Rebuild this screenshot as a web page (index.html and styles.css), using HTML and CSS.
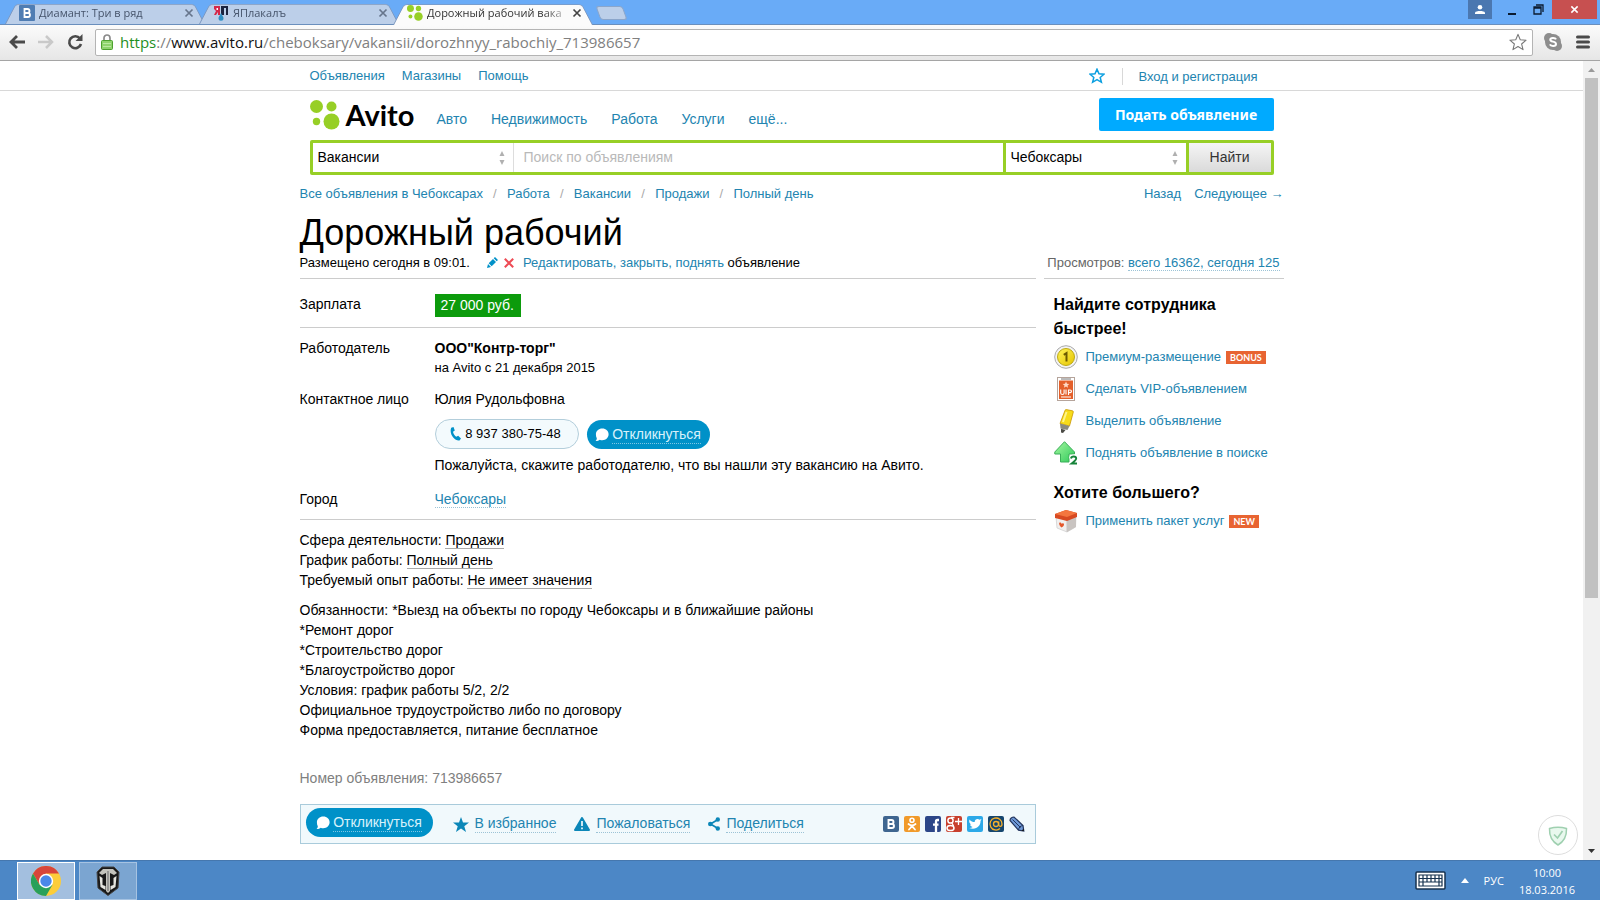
FILE: index.html
```
<!DOCTYPE html>
<html lang="ru">
<head>
<meta charset="utf-8">
<title>Дорожный рабочий</title>
<link rel="stylesheet" href="styles.css">
</head>
<body>
<svg width="0" height="0" class="defs" aria-hidden="true">
  <defs>
    <symbol id="x" viewBox="0 0 10 10"><path d="M1.500 1.500l7 7M8.500 1.500l-7 7" stroke="currentColor" stroke-width="1.700" fill="none"/></symbol>
    <symbol id="chat" viewBox="0 0 14 14"><path d="M7.300 0.500C11 0.500 13.600 3 13.600 6.300S11 12.200 7.300 12.200c-1 0-1.700-.1-2.500-.5C3.800 12.600 2.200 13.200.5 13.100c.9-.8 1.300-1.700 1.300-2.900C1.200 9.200.9 7.800.9 6.300.9 3 3.600.5 7.300.5z" fill="#fff"/></symbol>
    <symbol id="sort" viewBox="0 0 6 14"><path d="M3 0l2.500 5h-5zM3 14L.5 9h5z" fill="#b0b0b0"/></symbol>
    <symbol id="avito" viewBox="0 0 30 30"><g fill="#97cf26"><circle cx="6.500" cy="6.500" r="6.500"/><circle cx="21.500" cy="6.500" r="5"/><circle cx="6.500" cy="21.500" r="3.700"/><circle cx="21.500" cy="21.500" r="8"/></g></symbol>
    <linearGradient id="gy" x1="0" x2="1" y2="1"><stop offset="0" stop-color="#fff45a"/><stop offset="1" stop-color="#e5c400"/></linearGradient>
    <linearGradient id="gg" x1="0" x2="1" y2="1"><stop offset="0" stop-color="#a5f7a0"/><stop offset="1" stop-color="#2fc95a"/></linearGradient>
  </defs>
</svg>
<div class="window">
  <header class="tabs">
    <div class="tab">
      <svg class="fav" viewBox="0 0 16 16"><rect width="16" height="16" rx="1" fill="#4f7db3"/><path d="M5.500 4h3a2 2 0 0 1 0 4h-3zM5.500 8h3.500a2 2 0 0 1 0 4H5.500z" fill="none" stroke="#fff" stroke-width="1.800"/></svg>
      <span class="tab-title">Диамант: Три в ряд</span>
      <button class="tab-close" aria-label="Закрыть"><svg viewBox="0 0 10 10"><use href="#x"/></svg></button>
    </div>
    <div class="tab">
      <svg class="fav" viewBox="0 0 16 16"><path d="M1 1h6v9H5V7L3 10H1l2-4-2-2z" fill="#d5284a"/><path d="M8 1h7v9h-2V3h-2v7H8z" fill="#1b2440"/><path d="M3.500 3h1.500v2H3.500z" fill="#fff"/><path d="M8 8c1.500 3 2.500 4 2.500 5.300a2.500 2.500 0 0 1-5 0C5.500 12 6.500 11 8 8z" fill="#2d8fc4"/></svg>
      <span class="tab-title">ЯПлакалъ</span>
      <button class="tab-close" aria-label="Закрыть"><svg viewBox="0 0 10 10"><use href="#x"/></svg></button>
    </div>
    <div class="tab active">
      <svg class="fav" viewBox="0 0 30 30"><use href="#avito"/></svg>
      <span class="tab-title fade">Дорожный рабочий вака</span>
      <button class="tab-close" aria-label="Закрыть"><svg viewBox="0 0 10 10"><use href="#x"/></svg></button>
    </div>
    <button class="tab-new" aria-label="Новая вкладка"></button>
    <div class="win-buttons">
      <button class="user" aria-label="Профиль"><svg width="10" height="9" viewBox="0 0 10 9"><circle cx="5" cy="2.300" r="2.300" fill="#fff"/><path d="M0 9V7.500C1 5.500 9 5.500 10 7.500V9z" fill="#fff"/></svg></button>
      <button class="wb" aria-label="Свернуть"><svg width="10" height="12" viewBox="0 0 10 12"><path d="M1 10h8" stroke="#0b1b30" stroke-width="2"/></svg></button>
      <button class="wb" aria-label="Развернуть"><svg width="11" height="11" viewBox="0 0 11 11"><path d="M1 3h7v7H1zM1 4h7M3 1h7v7" fill="none" stroke="#0b1b30" stroke-width="1.300"/></svg></button>
      <button class="close" aria-label="Закрыть окно"><svg width="9" height="9" viewBox="0 0 10 10"><use href="#x"/></svg></button>
    </div>
  </header>
  <div class="toolbar">
    <button aria-label="Назад"><svg width="18" height="18" viewBox="0 0 18 18"><path d="M17 9H3M9 3L3 9l6 6" fill="none" stroke="#4a4a4a" stroke-width="2.800"/></svg></button>
    <button aria-label="Вперёд"><svg width="18" height="18" viewBox="0 0 18 18"><path d="M1 9h14M9 3l6 6-6 6" fill="none" stroke="#c9c9c9" stroke-width="2.500"/></svg></button>
    <button aria-label="Обновить"><svg width="18" height="18" viewBox="0 0 18 18"><path d="M14 5.500A6 6 0 1 0 15 11" fill="none" stroke="#4a4a4a" stroke-width="2.600"/><path d="M16.500 1v7h-7z" fill="#4a4a4a"/></svg></button>
    <div class="address">
      <svg width="12" height="16" viewBox="0 0 12 16"><path d="M3 8V4a3 3 0 0 1 6 0v4" fill="none" stroke="#8b8b8b" stroke-width="1.700"/><rect x=".5" y="6.500" width="11" height="9" rx="1" fill="#8fd36c" stroke="#4da12f"/><path d="M2 9.500h8M2 12.500h8" stroke="#b9eaa0"/></svg>
      <span class="url"><span class="https">https</span>://<b>www.avito.ru</b>/cheboksary/vakansii/dorozhnyy_rabochiy_713986657</span>
      <svg width="20" height="18" viewBox="0 0 20 20"><path d="M10 1.500l2.500 6 6.500.5-5 4.200 1.600 6.300L10 15l-5.600 3.500L6 12.200 1 8l6.500-.5z" fill="none" stroke="#777" stroke-width="1.200" stroke-linejoin="round"/></svg>
    </div>
    <button aria-label="Skype"><svg width="18" height="18" viewBox="0 0 18 18"><g fill="#8d8d8d"><circle cx="9" cy="9" r="8"/><circle cx="5" cy="5" r="5"/><circle cx="13" cy="13" r="5"/></g><path d="M12 6.300C11.300 4.500 6.300 4.400 6.300 6.700c0 2.500 5.700 1.400 5.700 4.200 0 2.700-5.200 2.600-6.100.5" fill="none" stroke="#fff" stroke-width="2"/></svg></button>
    <button class="menu" aria-label="Меню"><svg width="14" height="14" viewBox="0 0 14 14"><path d="M1.500 2h11M1.500 7h11M1.500 12h11" stroke="#4a4a4a" stroke-width="3" stroke-linecap="round"/></svg></button>
  </div>
  <div class="viewport">
    <main class="page">
      <div class="topbar">
        <nav class="wrap inset small">
          <a href="#">Объявления</a><a href="#">Магазины</a><a href="#">Помощь</a>
          <a href="#" class="fav-link" aria-label="Избранное"><svg width="16" height="16" viewBox="0 0 16 16"><path d="M8 1.200l2 4.600 5 .4-3.800 3.200 1.200 4.900L8 11.700l-4.400 2.600 1.200-4.900L1 6.200l5-.4z" fill="none" stroke="#0a9fe0" stroke-width="1.500"/></svg></a>
          <a href="#" class="login">Вход и регистрация</a>
        </nav>
      </div>
      <div class="wrap inset">
        <div class="head">
          <a href="#" class="logo"><svg width="30" height="30" viewBox="0 0 30 30"><use href="#avito"/></svg><span>Avito</span></a>
          <nav class="cats"><a href="#">Авто</a><a href="#">Недвижимость</a><a href="#">Работа</a><a href="#">Услуги</a><a href="#">ещё...</a></nav>
          <button class="post">Подать объявление</button>
        </div>
        <form class="search">
          <label class="sel cat"><select aria-label="Категория"><option>Вакансии</option></select><svg width="6" height="14" viewBox="0 0 6 14"><use href="#sort"/></svg></label>
          <input type="text" aria-label="Поиск" placeholder="Поиск по объявлениям">
          <label class="sel city"><select aria-label="Город"><option>Чебоксары</option></select><svg width="6" height="14" viewBox="0 0 6 14"><use href="#sort"/></svg></label>
          <button type="button">Найти</button>
        </form>
      </div>
      <div class="wrap">
        <nav class="crumbs small">
          <a href="#">Все объявления в Чебоксарах</a><i>/</i><a href="#">Работа</a><i>/</i><a href="#">Вакансии</a><i>/</i><a href="#">Продажи</a><i>/</i><a href="#">Полный день</a>
          <span class="pager"><a href="#">Назад</a><a href="#">Следующее →</a></span>
        </nav>
        <h1>Дорожный рабочий</h1>
        <div class="cols">
          <div class="left">
            <div class="meta small">
              <span>Размещено сегодня в 09:01.</span>
              <svg class="pencil" width="11" height="11" viewBox="0 0 11 11"><path d="M0 11l1-4 3 3zM1.700 6.300L6 2l3 3-4.300 4.300zM6.700 1.300L8 0l3 3-1.300 1.300z" fill="#0091c8"/></svg>
              <svg class="cross" width="12" height="12" viewBox="0 0 10 10"><use href="#x"/></svg>
              <span><a href="#">Редактировать, закрыть, поднять</a> объявление</span>
            </div>
            <dl class="row pay"><dt>Зарплата</dt><dd><span class="price">27 000 руб.</span></dd></dl>
            <div class="group">
              <dl class="row"><dt>Работодатель</dt><dd><strong>ООО"Контр-торг"</strong><div class="small since">на Avito с 21 декабря 2015</div></dd></dl>
              <dl class="row"><dt>Контактное лицо</dt><dd>Юлия Рудольфовна
                <div class="contact">
                  <button class="phone"><svg width="11" height="14" viewBox="0 0 11 14"><path d="M1.200.8L3.500 0l1.300 3.500L3 4.800c.4 2 1.500 3.700 3.200 4.900L8.200 8.800 11 11.500 9.500 13.500C5 14.500-1.300 7 1.200.8z" fill="#0091c8"/></svg>8 937 380-75-48</button>
                  <button class="reply"><svg width="14" height="14" viewBox="0 0 14 14"><use href="#chat"/></svg><span>Откликнуться</span></button>
                </div>
                Пожалуйста, скажите работодателю, что вы нашли эту вакансию на Авито.</dd></dl>
              <dl class="row"><dt>Город</dt><dd><a href="#" class="dot">Чебоксары</a></dd></dl>
            </div>
            <div class="text">
              <p>Сфера деятельности: <a href="#" class="dark">Продажи</a><br>График работы: <a href="#" class="dark">Полный день</a><br>Требуемый опыт работы: <a href="#" class="dark">Не имеет значения</a></p>
              <p>Обязанности: *Выезд на объекты по городу Чебоксары и в ближайшие районы<br>*Ремонт дорог<br>*Строительство дорог<br>*Благоустройство дорог<br>Условия: график работы 5/2, 2/2<br>Официальное трудоустройство либо по договору<br>Форма предоставляется, питание бесплатное</p>
            </div>
            <div class="number">Номер объявления: 713986657</div>
            <div class="actions">
              <button class="reply"><svg width="14" height="14" viewBox="0 0 14 14"><use href="#chat"/></svg><span>Откликнуться</span></button>
              <a href="#" class="act"><svg width="16" height="15" viewBox="0 0 16 15"><path d="M8 0l2 5.500 6 .1-4.700 3.600L13 15l-5-3.500L3 15l1.700-5.800L0 5.600l6-.1z" fill="#0c87b8"/></svg><span>В избранное</span></a>
              <a href="#" class="act"><svg width="16" height="14" viewBox="0 0 16 14"><path d="M8 1l7 12H1z" fill="#0c87b8" stroke="#0c87b8" stroke-width="2" stroke-linejoin="round"/><path d="M8 4v5M8 10.500v1.700" stroke="#fff" stroke-width="1.600"/></svg><span>Пожаловаться</span></a>
              <a href="#" class="act"><svg width="12" height="14" viewBox="0 0 12 14"><path d="M10 2.500L2.500 7l7.500 4.500" fill="none" stroke="#0c87b8" stroke-width="1.700"/><g fill="#0c87b8"><circle cx="9.800" cy="2.500" r="2.200"/><circle cx="2.300" cy="7" r="2.300"/><circle cx="9.800" cy="11.500" r="2.200"/></g></svg><span>Поделиться</span></a>
              <div class="social">
                <a href="#" aria-label="ВКонтакте"><svg viewBox="0 0 16 16"><rect width="16" height="16" rx="2" fill="#3f6690"/><path d="M5.500 4h3a2 2 0 0 1 0 4h-3zM5.500 8h3.500a2 2 0 0 1 0 4H5.500z" fill="none" stroke="#fff" stroke-width="1.900"/></svg></a>
                <a href="#" aria-label="Одноклассники"><svg viewBox="0 0 16 16"><rect width="16" height="16" rx="2" fill="#f19a2a"/><circle cx="8" cy="4.300" r="2" fill="none" stroke="#fff" stroke-width="1.600"/><path d="M4.500 8c2 1.700 5 1.700 7 0M5 13.500l3-3.300 3 3.300" fill="none" stroke="#fff" stroke-width="1.800" stroke-linecap="round"/></svg></a>
                <a href="#" aria-label="Facebook"><svg viewBox="0 0 16 16"><rect width="16" height="16" rx="2" fill="#2c4688"/><path d="M14 4h-1.500Q11 4 11 5.700V16M8 8.700h5.500" fill="none" stroke="#fff" stroke-width="2.300"/></svg></a>
                <a href="#" aria-label="Google+"><svg viewBox="0 0 16 16"><rect width="16" height="16" rx="2" fill="#c8402d"/><circle cx="4.500" cy="4.500" r="2.600" fill="none" stroke="#fff" stroke-width="1.500"/><ellipse cx="4.500" cy="12" rx="3.500" ry="2.600" fill="none" stroke="#fff" stroke-width="1.500"/><path d="M5 1.500h3.500M6 7l1.500 3M12.500 2v7M9 5.500h7" stroke="#fff" stroke-width="1.300"/></svg></a>
                <a href="#" aria-label="Twitter"><svg viewBox="0 0 16 16"><rect width="16" height="16" rx="2" fill="#2ca9e8"/><path d="M2.500 3.500c1.500 1.800 3.200 2.500 5.200 2.600C7.500 3 11 2 12.500 3.800l2-.7-1 2c.2 5-4.500 9.500-11.500 6.900 1.500.1 2.700-.3 3.600-1C4 10.700 3.200 9.800 3 8.600h1.200C2.500 7.500 1.700 5.500 2.500 3.500z" fill="#fff"/></svg></a>
                <a href="#" aria-label="Мой мир"><svg viewBox="0 0 16 16"><rect width="16" height="16" rx="2" fill="#15466e"/><path d="M12 12.500A6 6 0 1 1 14 8c0 3-3.300 3-3.300.5V5.500" fill="none" stroke="#f6b02c" stroke-width="1.300"/><circle cx="8" cy="8" r="2.500" fill="none" stroke="#f6b02c" stroke-width="1.300"/></svg></a>
                <a href="#" aria-label="LiveJournal"><svg viewBox="0 0 16 16"><path d="M1 4.500C1 2.500 3 1 5 1l9 8.500.8 5.500-5.300-.8z" fill="#6f9ad8" stroke="#23355e" stroke-width="1.200"/><path d="M3.500 3.500l8 8M9.500 14c.3-2.500 2-4.200 4.500-4.500" fill="none" stroke="#23355e"/><path d="M12.500 14.800l2.300.2-.3-2.300z" fill="#111"/></svg></a>
              </div>
            </div>
          </div>
          <aside class="right">
            <div class="views small">Просмотров: <a href="#" class="dot">всего 16362, сегодня 125</a></div>
            <div class="promo small">
              <h2>Найдите сотрудника быстрее!</h2>
              <ul>
                <li><svg width="24" height="24" viewBox="0 0 24 24"><circle cx="12" cy="12" r="11.300" fill="#f3f3f3" stroke="#aaa"/><circle cx="12" cy="12" r="8.500" fill="url(#gy)" stroke="#bda913"/><path d="M9.800 9.800L12.500 8v8.500" fill="none" stroke="#6b5a00" stroke-width="2"/></svg><a href="#">Премиум-размещение</a><span class="tag">BONUS</span></li>
                <li><svg width="24" height="24" viewBox="0 0 24 24"><rect x="3.500" y=".5" width="17" height="23" fill="#fff" stroke="#b5a49b"/><rect x="5" y="3.500" width="14" height="18.500" fill="#e4602b"/><path d="M7 2h10" stroke="#777"/><path d="M12 4.500l1 2.300 2.300.1-1.800 1.500.6 2.300L12 9.400l-2.100 1.300.6-2.300-1.800-1.500 2.300-.1z" fill="#ffd9c5"/><path d="M6.700 12.500v3.500q0 1.500 1.700 1.500t1.700-1.500v-3.500M12 12.500v5M14.500 18v-5h1.500q1.500 0 1.500 1.300t-1.500 1.300h-1.500M7 20h10" fill="none" stroke="#fff" stroke-width="1.100"/></svg><a href="#">Сделать VIP-объявлением</a></li>
                <li><svg width="24" height="24" viewBox="0 0 24 24"><path d="M11 1.500q.2-1 1.300-.9l6.200 1.200q1 .3.800 1.300L15.500 17l-9.500-2.500z" fill="#f7dc1a" stroke="#c89600" stroke-width=".8"/><path d="M12.500 3L9 13" stroke="#fff58a" stroke-width="2"/><path d="M6 14.500l9.500 2.500-2 4-7-1.500z" fill="#8a8a7e"/><path d="M7 19.800l4.500 1.200L9 24l-2-.5z" fill="#4b4b45"/></svg><a href="#">Выделить объявление</a></li>
                <li><svg width="24" height="24" viewBox="0 0 24 24"><path d="M10.500.7L20.500 11v2H15v8H6.500v-8H.8v-2z" fill="url(#gg)" stroke="#3bae58"/><path d="M17 17.500q.3-2 2.700-2 2.500 0 2.500 2 0 1.500-4.500 5h5.300" fill="none" stroke="#fff" stroke-width="4"/><path d="M17 17.500q.3-2 2.700-2 2.500 0 2.500 2 0 1.500-4.500 5h5.300" fill="none" stroke="#16833a" stroke-width="1.900"/></svg><a href="#">Поднять объявление в поиске</a></li>
              </ul>
              <h2>Хотите большего?</h2>
              <ul>
                <li><svg width="24" height="24" viewBox="0 0 24 24"><path d="M2 8l11 3v12L3 19zM22 7l-9 4v12l8.500-5z" fill="#f1efee" stroke="#ccc" stroke-width=".7"/><path d="M13 11l9-4v11l-9 5z" fill="#c9c4c1"/><path d="M1 5l11-4 11 3v4l-10 4L1 9z" fill="#d84a22"/><path d="M1 5l11-4 11 3-10 4z" fill="#f4763f"/><path d="M7.500 18.500C4 15 5 13 6.500 13.500q1 .3 1.200 1.400.5-1 1.600-.6c1.500.8.7 3-1.800 4.200z" fill="#e4572b"/></svg><a href="#">Применить пакет услуг</a><span class="tag">NEW</span></li>
              </ul>
            </div>
          </aside>
        </div>
      </div>
      <svg class="guard" width="40" height="40" viewBox="0 0 40 40"><circle cx="20" cy="20" r="19.500" fill="#fff" stroke="#ddd"/><path d="M11.500 13.500q8.500-2.500 17 0c.3 8-2.500 13-8.500 16.500-6-3.500-8.800-8.500-8.500-16.500z" fill="#e9f8ee" stroke="#9fd0b0" stroke-width="1.500"/><path d="M16 19.500l3.500 3.500 5-7" fill="none" stroke="#9fd0b0" stroke-width="1.700"/></svg>
    </main>
    <div class="scroll">
      <svg width="7" height="4" viewBox="0 0 7 4"><path d="M0 4l3.500-4L7 4z" fill="#9a9a9a"/></svg>
      <div class="track"><div class="thumb"></div></div>
      <svg width="7" height="4" viewBox="0 0 7 4"><path d="M0 0h7L3.500 4z" fill="#333"/></svg>
    </div>
  </div>
  <footer class="taskbar">
    <button class="app on" aria-label="Chrome"><svg width="30" height="30" viewBox="0 0 30 30"><circle cx="15" cy="15" r="15" fill="#fccd3a"/><path d="M2 7.500A15 15 0 0 1 28 7.500H15L8.500 18.700z" fill="#d8453a"/><path d="M2 7.500A15 15 0 0 0 15 30l6.500-11.300h-13z" fill="#29a05a"/><circle cx="15" cy="15" r="7.200" fill="#fff"/><circle cx="15" cy="15" r="5.700" fill="#4a87e8"/></svg></button>
    <button class="app" aria-label="World of Tanks"><svg width="24" height="30" viewBox="0 0 24 30"><path d="M6 1h12l5 5-1 16-10 7.500L2 22 1 6z" fill="#191919" stroke="#444"/><path d="M7 3h10l4 4-3 2-4-2v18l-2 2-2-2V7L6 9 3 7z" fill="#c4c4bd"/><path d="M3.500 10l3 2v7l3 1v4l-5-3zM20.500 10l-3 2v7l-3 1v4l5-3z" fill="#e5e5df"/><path d="M12 5v20" stroke="#777" stroke-width="1.200"/></svg></button>
    <div class="tray">
      <svg width="31" height="19" viewBox="0 0 31 19"><rect x="1" y="1" width="29" height="17" rx="1" fill="#fff" stroke="#16324f" stroke-width="1.500"/><path d="M4 4h23v3.500H4zM4 7.500h23v3.500H4zM4 11h23v4H4zM8 4v11M12 4v7M16 4v7M20 4v7M24 4v11" fill="none" stroke="#16324f" stroke-width="1.200"/></svg>
      <svg width="8" height="5" viewBox="0 0 8 5"><path d="M0 5l4-5 4 5z" fill="#fff"/></svg>
      <span class="lang">РУС</span>
      <div class="clock">10:00<br>18.03.2016</div>
    </div>
  </footer>
</div>
</body>
</html>
```
FILE: styles.css
```
* { box-sizing: border-box; }
body { margin: 0; background: #fff; color: #000; font: 14px/20px "Liberation Sans", Arial, sans-serif; }
button, input, select { font: inherit; color: inherit; border: 0; padding: 0; margin: 0; background: none; border-radius: 0; }
a { color: #2284b0; text-decoration: none; }
svg { display: block; flex: none; }
dl, dd, p, ul, h1, h2 { margin: 0; padding: 0; }
.defs { position: absolute; }
.small { font-size: 13px; }
.window { height: 100vh; display: flex; flex-direction: column; overflow: hidden; }

/* browser tabs */
.tabs { height: 25px; flex: none; display: flex; background: #69abf7; padding: 1px 3px 0 8px; font: 11px/22px "Open Sans", sans-serif; border-bottom: 1px solid #6a8fbd; }
.tab { position: relative; z-index: 0; width: 194px; display: flex; align-items: center; gap: 4px; padding: 0 8px 0 11px; color: #46546b; }
.tab::before { content: ""; position: absolute; z-index: -1; inset: 0 -3px; background: #bccfe9; border: 1px solid #7d98bf; border-bottom: 0; border-radius: 4px 4px 0 0; transform: perspective(40px) rotateX(12deg); transform-origin: bottom; }
.tab.active { z-index: 1; color: #333; }
.tab.active::before { background: #fbfbfb; bottom: -1px; }
.fav { width: 16px; height: 16px; }
.tab-title { flex: 1; min-width: 0; white-space: nowrap; }
.fade { mask-image: linear-gradient(90deg, #000 82%, rgba(0, 0, 0, 0.2)); }
.tab-close { color: #66758c; }
.active .tab-close { color: #444; }
.tab-close svg { width: 10px; height: 10px; }
.tab-new { width: 27px; height: 14px; margin: 5px 0 0 8px; background: #bccfe9; border: 1px solid #8ba6cb; border-radius: 3px; transform: skewX(20deg); }
.win-buttons { margin-left: auto; margin-top: -1px; display: flex; align-items: flex-start; }
.win-buttons button { height: 19px; display: flex; align-items: center; justify-content: center; }
.user { width: 24px; background: #4b77b0; margin-right: 7px; }
.wb { width: 26px; }
.win-buttons .close { width: 45px; background: #c75050; color: #fff; margin-left: 1px; }

.toolbar { height: 36px; flex: none; display: flex; align-items: center; gap: 11px; padding: 0 10px 1px 8px; background: linear-gradient(#fbfbfb, #e6e6e6); border-bottom: 1px solid #a5a5a5; }
.menu { margin-left: 3px; }
.address { flex: 1; height: 27px; display: flex; align-items: center; gap: 7px; padding: 0 4px 0 5px; background: #fff; border: 1px solid #b4b4b4; border-radius: 2px; }
.url { flex: 1; font: 15px/20px "Open Sans", sans-serif; color: #808080; white-space: nowrap; overflow: hidden; }
.url b { font-weight: 400; color: #111; }
.https { color: #1f8f1f; }

/* page */
.viewport { flex: 1; min-height: 0; display: flex; }
.page { position: relative; flex: 1; min-width: 0; overflow: hidden; }
.scroll { width: 17px; background: #f1f1f1; display: flex; flex-direction: column; align-items: center; padding: 7px 0; gap: 6px; }
.track { flex: 1; align-self: stretch; padding: 0 2px; }
.thumb { height: 68%; background: #c1c1c1; }
.wrap { max-width: 984px; margin: 0 auto; }
.inset { padding: 0 10px; }
.topbar { height: 30px; border-bottom: 1px solid #d8d8d8; }
.topbar nav { display: flex; align-items: center; gap: 17px; height: 30px; }
.fav-link { margin-left: auto; }
.login { border-left: 1px solid #d8d8d8; padding: 0 16px 0 15px; line-height: 17px; }
.head { display: flex; align-items: center; height: 49px; }
.logo { display: flex; align-items: center; gap: 6px; color: #000; font: 700 29px/30px Lato, sans-serif; margin-bottom: 2px; }
.cats { display: flex; gap: 24px; margin: 7px 0 0 22px; }
.post { margin-left: auto; width: 175px; height: 33px; padding-top: 1px; border-radius: 2px; background: #0af; color: #fff; font: 700 14px/20px "Noto Sans", sans-serif; margin-bottom: 3px; }
.search { display: flex; height: 35px; padding: 3px; gap: 3px; border-radius: 2px; background: #97cf26; }
.sel { position: relative; background: #fff; display: flex; align-items: center; }
.sel select { appearance: none; width: 100%; height: 100%; padding: 0 0 2px 5px; outline: 0; }
.sel svg { position: absolute; right: 8px; }
.cat { width: 201px; border-right: 1px solid #ddd; margin-right: -3px; }
.city { width: 180px; }
.search input { flex: 1; min-width: 0; padding: 0 10px 2px; background: #fff; }
.search input::placeholder { color: #b9b9b9; }
.search button { width: 82px; padding-bottom: 2px; background: linear-gradient(#f5f5f5, #dadada); color: #333; }
.crumbs { display: flex; padding-top: 9px; }
.crumbs i { width: 24px; text-align: center; font-style: normal; color: #aaa; }
.pager { margin-left: auto; display: flex; gap: 13px; }
h1 { font: 36px/40px "Liberation Sans", Arial, sans-serif; margin-top: 9px; }
.cols { display: flex; gap: 8px; }
.left { flex: 1; min-width: 0; }
.right { width: 240px; }
.meta, .views { height: 26px; border-bottom: 1px solid #ccc; white-space: nowrap; }
.meta { display: flex; gap: 5px; }
.meta svg { margin-top: 4px; }
.pencil { margin-left: 12px; }
.cross { color: #ee4b55; }
.meta span:last-child { margin-left: 3px; }
.views { text-align: right; padding-right: 4px; color: #666; }
.dot { border-bottom: 1px dotted #9cc3d6; }
.row { display: flex; }
.row dt { width: 135px; flex: none; }
.pay { height: 49px; padding-top: 15px; border-bottom: 1px solid #ccc; }
.price { display: inline-block; height: 23px; line-height: 22px; padding: 0 7px 0 6px; background: #0c9b0c; color: #fff; }
.group { display: flex; flex-direction: column; gap: 14px; padding: 10px 0; border-bottom: 1px solid #ccc; }
.group .row:first-child { margin-bottom: -3px; }
.contact { display: flex; gap: 8px; height: 30px; margin: 10px 0 6px; align-items: flex-end; }
.phone { display: flex; align-items: center; justify-content: center; gap: 4px; width: 144px; height: 30px; padding-right: 2px; border: 1px solid #b3cedb; border-radius: 15px; background: #f3fafd; font-size: 13px; }
.reply { display: flex; align-items: center; justify-content: center; gap: 3px; width: 123px; height: 29px; border-radius: 15px; background: #0091c8; color: #d8f1fb; }
.reply span { border-bottom: 1px dotted #7dc7e5; line-height: 17px; }
.text { padding-top: 10px; }
.text p { margin-bottom: 10px; }
.dark { color: #000; border-bottom: 1px solid #aaa; }
.number { margin-top: 28px; color: #808080; }
.actions { display: flex; align-items: center; height: 40px; margin-top: 16px; padding: 0 10px 0 5px; background: #f1f9fc; border: 1px solid #a9cbdb; }
.actions .reply { width: 127px; margin: 0 20px 3px 0; }
.act { display: flex; align-items: center; gap: 6px; margin-right: 18px; }
.act span { border-bottom: 1px dotted #9cc3d6; line-height: 17px; }
.social { margin-left: auto; display: flex; gap: 5px; }
.social svg { width: 16px; height: 16px; }
.promo { padding: 14px 0 0 10px; }
h2 { font: 700 16px/24px "Liberation Sans", Arial, sans-serif; max-width: 200px; }
ul { list-style: none; margin-bottom: 12px; }
li { display: flex; align-items: center; gap: 8px; height: 32px; }
.tag { background: #e86432; color: #fff; font: 700 9px/13px Lato, sans-serif; padding: 0 4px; margin-left: -3px; }
.guard { position: absolute; right: 5px; bottom: 5px; }

/* taskbar */
.taskbar { height: 40px; flex: none; display: flex; align-items: center; gap: 4px; padding: 0 25px 0 17px; background: #4c87c6; border-top: 1px solid #4577ae; color: #fff; font: 11px/17px "Open Sans", sans-serif; }
.app { width: 58px; height: 38px; display: flex; align-items: center; justify-content: center; background: #7ba5d1; border: 1px solid #a6c3e2; }
.on { background: #a3bfdf; border-color: #fff; }
.tray { margin-left: auto; display: flex; align-items: center; gap: 15px; }
.clock { text-align: center; }
```
